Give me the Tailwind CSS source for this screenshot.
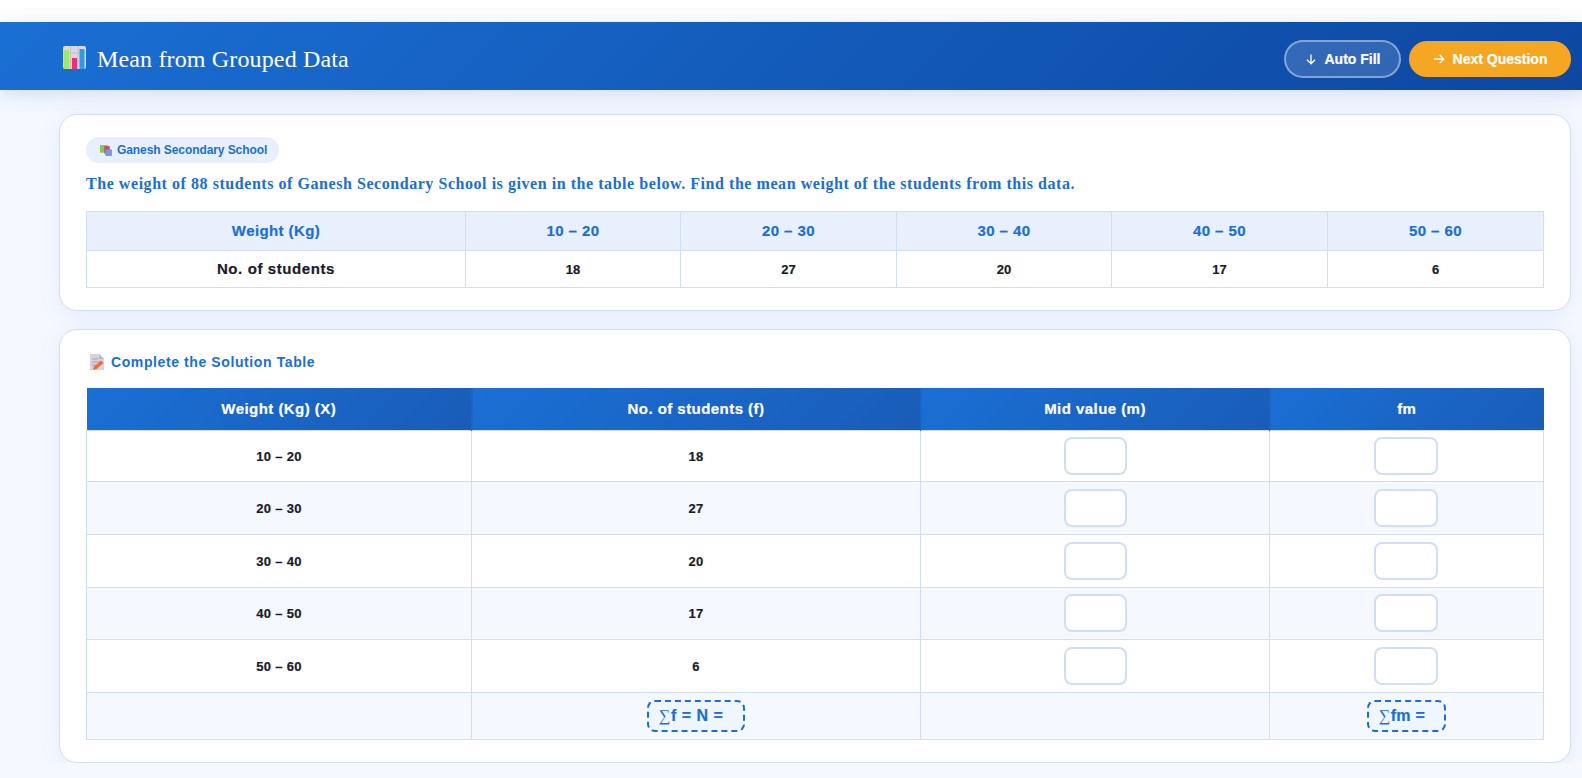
<!DOCTYPE html>
<html>

<head>
    <meta charset="utf-8">
    <title>Mean from Grouped Data</title>
    <script src="https://cdn.jsdelivr.net/npm/@tailwindcss/browser@4"></script>
</head>

<body class="bg-[#f5f8ff] font-['Liberation_Sans',Arial,sans-serif] overflow-hidden">

    <div class="h-[22px] bg-white"></div>

    <header class="relative z-10 h-[68px] flex items-center justify-between pt-[6px] pl-[63px] pr-[11px] bg-[linear-gradient(135deg,#1a6fd4,#0d47a1)] shadow-[0_4px_20px_rgba(13,71,161,0.15)]">
        <div class="flex items-center gap-[11px]">
            <svg class="mb-[3px]" width="23" height="23" viewBox="0 0 23 23">
                <rect width="23" height="23" rx="2" fill="#dcd8e2" />
                <path d="M7.5 0V23M15 0V23M0 7H23M0 15H23" stroke="#c4c0cc" stroke-width="1" />
                <rect x="1" y="4" width="5" height="19" fill="#a5e36a" />
                <rect x="9" y="12" width="5" height="11" fill="#ea2f72" />
                <rect x="16.500" y="3" width="5" height="20" fill="#2c9be8" />
            </svg>
            <h1 class="font-['Liberation_Serif',serif] text-[24px] leading-none tracking-[0.15px] text-white">Mean from Grouped Data</h1>
        </div>
        <div class="flex items-center gap-2">
            <button class="w-[117px] h-[38px] flex items-center justify-center gap-2 rounded-full border-2 border-white/40 bg-white/15 text-white text-[14px] font-bold [-webkit-text-stroke:0.2px]">
                <svg width="12" height="12" viewBox="0 0 12 12" fill="none" stroke="white" stroke-width="1.300"><path d="M6 1.500V10.500M2 6.800L6 10.800L10 6.800" /></svg>
                Auto Fill
            </button>
            <button class="w-[162px] h-[36px] flex items-center justify-center gap-2 rounded-full bg-[#f5a623] text-white text-[14px] font-bold [-webkit-text-stroke:0.2px]">
                <svg width="12" height="12" viewBox="0 0 12 12" fill="none" stroke="white" stroke-width="1.300"><path d="M1 6H11M6.800 2L10.800 6L6.800 10" /></svg>
                Next Question
            </button>
        </div>
    </header>

    <main class="ml-[59px] mr-[11px] mt-[24px] flex flex-col gap-[18px]">

        <section class="h-[197px] bg-white rounded-[18px] border border-[#d0dff7] shadow-[0_4px_24px_rgba(26,111,212,0.08)] px-[26px] pt-[22px]">
            <div class="flex w-fit items-center gap-[4px] h-[26px] pl-[14px] pr-[12px] rounded-full bg-[#e8f0fe] text-[#1a6fd4] text-[12px] tracking-[-0.08px] font-bold">
                <svg width="13" height="13" viewBox="0 0 12 12">
                    <rect x="0" y="1" width="7" height="7" fill="#7fc95a" />
                    <rect x="4" y="2" width="5" height="7" fill="#d8406a" />
                    <rect x="5" y="5" width="6" height="6" fill="#6f9ee0" />
                </svg>
                Ganesh Secondary School
            </div>
            <p class="mt-[10px] font-['Liberation_Serif',serif] text-[16px] leading-[22px] font-bold tracking-[0.55px] text-[#1a6fd4]">The weight of 88 students of Ganesh Secondary School is given in the table below. Find the mean weight of the students from this data.</p>
            <table class="mt-[16px] w-[1457px] table-fixed border-collapse text-center text-[13px] font-bold [-webkit-text-stroke:0.2px]">
                <colgroup>
                    <col class="w-[379px]"><col class="w-[215px]"><col class="w-[216px]"><col class="w-[215px]"><col class="w-[216px]"><col class="w-[216px]">
                </colgroup>
                <tr class="h-[39px] bg-[#e8f0fe] text-[#1a6fd4] text-[15px] tracking-[0.4px]">
                    <th class="pt-[1px] border border-[#d0dff7]">Weight (Kg)</th>
                    <th class="pt-[1px] border border-[#d0dff7]">10 – 20</th>
                    <th class="pt-[1px] border border-[#d0dff7]">20 – 30</th>
                    <th class="pt-[1px] border border-[#d0dff7]">30 – 40</th>
                    <th class="pt-[1px] border border-[#d0dff7]">40 – 50</th>
                    <th class="pt-[1px] border border-[#d0dff7]">50 – 60</th>
                </tr>
                <tr class="h-[37px] text-[#1a1a2e]">
                    <td class="pt-[1px] border border-[#d0dff7] text-[15px] tracking-[0.6px]">No. of students</td>
                    <td class="pt-[1px] border border-[#d0dff7]">18</td>
                    <td class="pt-[1px] border border-[#d0dff7]">27</td>
                    <td class="pt-[1px] border border-[#d0dff7]">20</td>
                    <td class="pt-[1px] border border-[#d0dff7]">17</td>
                    <td class="pt-[1px] border border-[#d0dff7]">6</td>
                </tr>
            </table>
        </section>

        <section class="h-[434px] bg-white rounded-[18px] border border-[#d0dff7] shadow-[0_4px_24px_rgba(26,111,212,0.08)] px-[26px] pt-[22px]">
            <h2 class="flex items-center gap-[7px] pl-[4px] h-[20px] text-[14px] font-bold text-[#1a6fd4] tracking-[0.6px]">
                <svg width="14" height="16" viewBox="0 0 14 16">
                    <path d="M0 0H9L14 5V16H0Z" fill="#d9d2e0" />
                    <path d="M9 0L14 5H9Z" fill="#bdb4c6" />
                    <path d="M2 5H8M2 8H11M2 11H6" stroke="#a99fb5" stroke-width="1" />
                    <path d="M3 16L4 12.500L11 6.500L13.500 9L6.500 15Z" fill="#f26b3a" />
                </svg>
                Complete the Solution Table
            </h2>
            <table class="mt-[16px] w-[1457px] table-fixed border-collapse text-center text-[13px] tracking-[0.3px] font-bold text-[#1a1a2e] [-webkit-text-stroke:0.2px]">
                <colgroup>
                    <col class="w-[385px]"><col class="w-[449px]"><col class="w-[349px]"><col class="w-[274px]">
                </colgroup>
                <tr class="h-[42px] text-white text-[15px] tracking-[0.45px]">
                    <th class="bg-[linear-gradient(135deg,#1a6fd4,#1a5cb8)] border-r border-[#1a64c4]">Weight (Kg) (X)</th>
                    <th class="bg-[linear-gradient(135deg,#1a6fd4,#1a5cb8)] border-r border-[#1a64c4]">No. of students (f)</th>
                    <th class="bg-[linear-gradient(135deg,#1a6fd4,#1a5cb8)] border-r border-[#1a64c4]">Mid value (m)</th>
                    <th class="bg-[linear-gradient(135deg,#1a6fd4,#1a5cb8)]">fm</th>
                </tr>
                <tr class="h-[51px]">
                    <td class="pt-[2px] border border-[#d0dff7]">10 – 20</td>
                    <td class="pt-[2px] border border-[#d0dff7]">18</td>
                    <td class="border border-[#d0dff7]"><input class="block mx-auto w-[63px] h-[38px] bg-white rounded-lg border-2 border-[#d0dff7]"></td>
                    <td class="pr-[2px] border border-[#d0dff7]"><input class="block mx-auto w-[64px] h-[38px] bg-white rounded-lg border-2 border-[#d0dff7]"></td>
                </tr>
                <tr class="h-[53px] bg-[#f5f8ff]">
                    <td class="pt-[2px] border border-[#d0dff7]">20 – 30</td>
                    <td class="pt-[2px] border border-[#d0dff7]">27</td>
                    <td class="border border-[#d0dff7]"><input class="block mx-auto w-[63px] h-[38px] bg-white rounded-lg border-2 border-[#d0dff7]"></td>
                    <td class="pr-[2px] border border-[#d0dff7]"><input class="block mx-auto w-[64px] h-[38px] bg-white rounded-lg border-2 border-[#d0dff7]"></td>
                </tr>
                <tr class="h-[53px]">
                    <td class="pt-[2px] border border-[#d0dff7]">30 – 40</td>
                    <td class="pt-[2px] border border-[#d0dff7]">20</td>
                    <td class="border border-[#d0dff7]"><input class="block mx-auto w-[63px] h-[38px] bg-white rounded-lg border-2 border-[#d0dff7]"></td>
                    <td class="pr-[2px] border border-[#d0dff7]"><input class="block mx-auto w-[64px] h-[38px] bg-white rounded-lg border-2 border-[#d0dff7]"></td>
                </tr>
                <tr class="h-[52px] bg-[#f5f8ff]">
                    <td class="pt-[2px] border border-[#d0dff7]">40 – 50</td>
                    <td class="pt-[2px] border border-[#d0dff7]">17</td>
                    <td class="border border-[#d0dff7]"><input class="block mx-auto w-[63px] h-[38px] bg-white rounded-lg border-2 border-[#d0dff7]"></td>
                    <td class="pr-[2px] border border-[#d0dff7]"><input class="block mx-auto w-[64px] h-[38px] bg-white rounded-lg border-2 border-[#d0dff7]"></td>
                </tr>
                <tr class="h-[53px]">
                    <td class="pt-[2px] border border-[#d0dff7]">50 – 60</td>
                    <td class="pt-[2px] border border-[#d0dff7]">6</td>
                    <td class="border border-[#d0dff7]"><input class="block mx-auto w-[63px] h-[38px] bg-white rounded-lg border-2 border-[#d0dff7]"></td>
                    <td class="pr-[2px] border border-[#d0dff7]"><input class="block mx-auto w-[64px] h-[38px] bg-white rounded-lg border-2 border-[#d0dff7]"></td>
                </tr>
                <tr class="h-[47px] bg-[#f5f8ff]">
                    <td class="border border-[#d0dff7]"></td>
                    <td class="border border-[#d0dff7]">
                        <div class="mx-auto w-[98px] h-[32px] pl-[10px] flex items-center text-left text-[16px] tracking-[0.5px] text-[#1a6fd4] bg-[#f0f6ff] rounded-lg border-2 border-dashed border-[#1a6fd4]"><span class="font-['Liberation_Serif',serif] font-normal [-webkit-text-stroke:0px]">∑</span>f = N =</div>
                    </td>
                    <td class="border border-[#d0dff7]"></td>
                    <td class="border border-[#d0dff7]">
                        <div class="mx-auto w-[79px] h-[32px] pl-[10px] flex items-center text-left text-[16px] tracking-[0.3px] text-[#1a6fd4] bg-[#f0f6ff] rounded-lg border-2 border-dashed border-[#1a6fd4]"><span class="font-['Liberation_Serif',serif] font-normal [-webkit-text-stroke:0px]">∑</span>fm =</div>
                    </td>
                </tr>
            </table>
        </section>
    </main>

</body>

</html>
